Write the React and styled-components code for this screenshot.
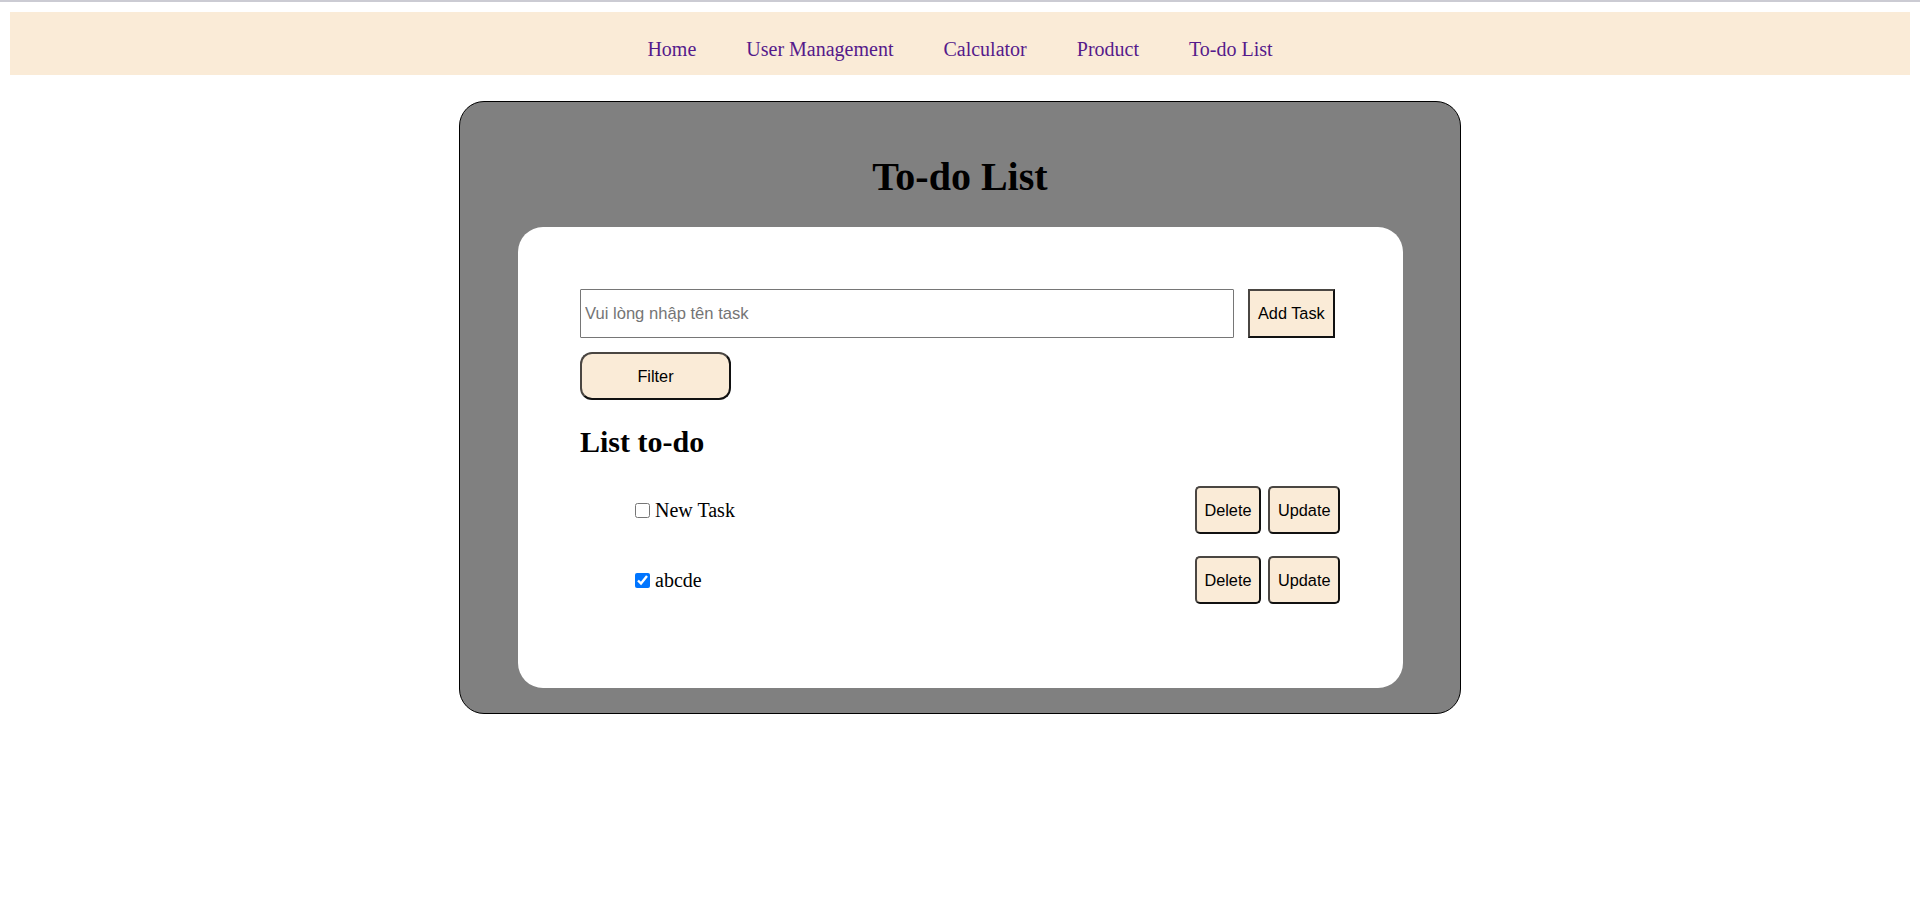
import { useState } from "react";
import styled, { createGlobalStyle } from "styled-components";

const GlobalStyle = createGlobalStyle`
  html {
    border-top: 2px solid #cbcbd3;
  }
  body {
    margin: 10px;
    font-family: "Liberation Serif", "Times New Roman", serif;
    background-color: #fff;
    color: #000;
  }
`;

const NavBar = styled.nav`
  background-color: #faebd7;
  padding: 26px 0 14px;
`;
const NavList = styled.ul`
  list-style: none;
  margin: 0;
  padding: 0;
  display: flex;
  justify-content: center;
  gap: 50px;
`;
const NavLink = styled.a`
  font-size: 20px;
  line-height: 23px;
  color: #551a8b;
  text-decoration: none;
  cursor: pointer;
`;

const Card = styled.div`
  box-sizing: border-box;
  width: 1002px;
  margin: 26px auto 0;
  padding: 25px 0;
  background-color: #808080;
  border: 1px solid #000;
  border-radius: 25px;
`;
const Title = styled.h1`
  font-size: 40px;
  line-height: 1.15;
  font-weight: bold;
  text-align: center;
  margin: 26.8px 0;
`;
const Panel = styled.div`
  width: 885px;
  margin: 0 auto;
  box-sizing: border-box;
  padding: 62.5px;
  background-color: #fff;
  border-radius: 25px;
`;
const InputRow = styled.form`
  display: flex;
  align-items: center;
  gap: 14px;
`;
const TaskInput = styled.input`
  box-sizing: border-box;
  width: 654px;
  height: 49px;
  padding: 0 4px;
  border: 1px solid #767676;
  border-radius: 1px;
  font-family: "Liberation Sans", Arial, sans-serif;
  font-size: 16.6px;
  color: #000;
  &::placeholder {
    color: #757575;
  }
  &:focus {
    outline: none;
  }
`;
const Button = styled.button`
  box-sizing: border-box;
  height: ${(p) => p.$h || 48}px;
  width: ${(p) => (p.$w ? `${p.$w}px` : "auto")};
  padding: 0 ${(p) => p.$px ?? 8}px;
  background-color: #faebd7;
  border: 2px solid #111;
  border-top-color: #4a4642;
  border-left-color: #4a4642;
  border-radius: ${(p) => p.$r ?? 5}px;
  font-family: "Liberation Sans", Arial, sans-serif;
  font-size: 16.3px;
  color: #000;
  cursor: pointer;
`;
const FilterButton = styled(Button)`
  display: block;
  margin-top: 14px;
`;
const SubTitle = styled.h2`
  font-size: 30px;
  line-height: 1.15;
  font-weight: bold;
  margin: 25px 0 0;
`;
const TaskList = styled.ul`
  list-style: none;
  margin: 26.5px 0 21px;
  padding: 0 0 0 50px;
  display: flex;
  flex-direction: column;
  gap: 22px;
`;
const TaskRow = styled.li`
  display: flex;
  justify-content: space-between;
  align-items: center;
`;
const TaskLabel = styled.label`
  display: flex;
  align-items: center;
  gap: 5px;
  font-size: 20px;
`;
const Check = styled.input`
  width: 15px;
  height: 15px;
  margin: 0 0 0 5px;
`;
const Actions = styled.div`
  display: flex;
  gap: 7.5px;
`;

const links = ["Home", "User Management", "Calculator", "Product", "To-do List"];

export default function App() {
  const [tasks, setTasks] = useState([
    { id: 1, name: "New Task", done: false },
    { id: 2, name: "abcde", done: true },
  ]);

  const toggle = (id) =>
    setTasks((t) => t.map((x) => (x.id === id ? { ...x, done: !x.done } : x)));

  return (
    <>
      <GlobalStyle />
      <NavBar>
        <NavList>
          {links.map((l) => (
            <li key={l}>
              <NavLink>{l}</NavLink>
            </li>
          ))}
        </NavList>
      </NavBar>
      <Card>
        <Title>To-do List</Title>
        <Panel>
          <InputRow onSubmit={(e) => e.preventDefault()}>
            <TaskInput type="text" placeholder="Vui lòng nhập tên task" />
            <Button type="submit" $h={49} $r={0} $px={8}>
              Add Task
            </Button>
          </InputRow>
          <FilterButton $w={151} $r={12}>
            Filter
          </FilterButton>
          <SubTitle>List to-do</SubTitle>
          <TaskList>
            {tasks.map((t) => (
              <TaskRow key={t.id}>
                <TaskLabel>
                  <Check
                    type="checkbox"
                    checked={t.done}
                    onChange={() => toggle(t.id)}
                  />
                  {t.name}
                </TaskLabel>
                <Actions>
                  <Button $px={7.5}>Delete</Button>
                  <Button $px={7.5}>Update</Button>
                </Actions>
              </TaskRow>
            ))}
          </TaskList>
        </Panel>
      </Card>
    </>
  );
}
